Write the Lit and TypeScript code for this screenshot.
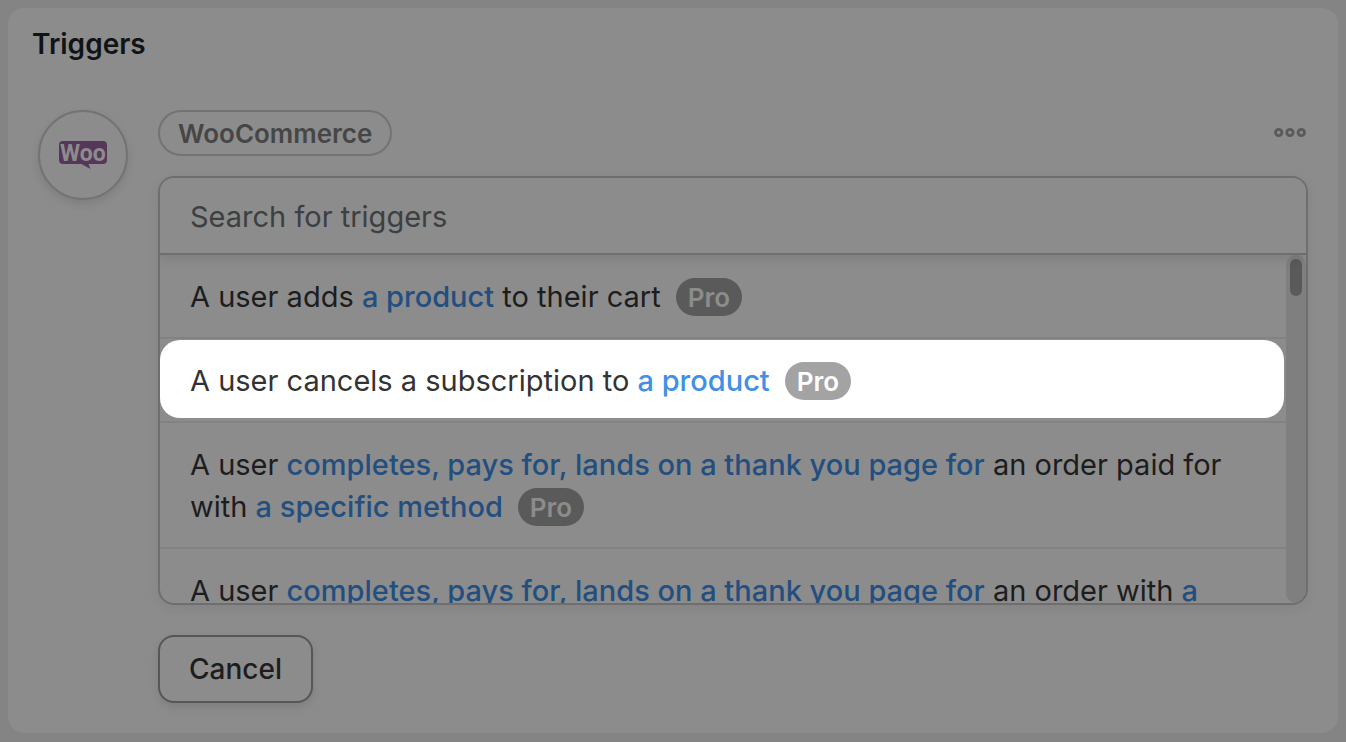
import { LitElement, html, css } from "lit";
import { customElement } from "lit/decorators.js";

interface Part {
  text: string;
  token?: boolean;
}

interface Trigger {
  parts: Part[];
  pro: boolean;
  active?: boolean;
}

const TRIGGERS: Trigger[] = [
  {
    parts: [{ text: "A user adds " }, { text: "a product", token: true }, { text: " to their cart" }],
    pro: true,
  },
  {
    parts: [{ text: "A user cancels a subscription to " }, { text: "a product", token: true }],
    pro: true,
    active: true,
  },
  {
    parts: [
      { text: "A user " },
      { text: "completes, pays for, lands on a thank you page for", token: true },
      { text: " an order paid for with " },
      { text: "a specific method", token: true },
    ],
    pro: true,
  },
  {
    parts: [
      { text: "A user " },
      { text: "completes, pays for, lands on a thank you page for", token: true },
      { text: " an order with " },
      { text: "a", token: true },
    ],
    pro: false,
  },
];

@customElement("app-root")
export class AppRoot extends LitElement {
  static styles = css`
    :host {
      display: block;
      box-sizing: border-box;
      min-height: 100vh;
      padding: 8px 8px 9px;
      background: #848484;
      color: #1d1d1d;
      font-family: Inter, "Liberation Sans", sans-serif;
    }
    * {
      box-sizing: border-box;
    }
    .panel {
      padding: 16px 30px 30px;
      border-radius: 16px;
      background: #8c8c8c;
    }
    .title {
      margin: 0 0 46px -6px;
      color: #101417;
      font-size: 28px;
      line-height: 40px;
      font-weight: 600;
    }
    .trigger {
      display: grid;
      grid-template-columns: 90px minmax(0, 1fr);
      column-gap: 30px;
      align-items: start;
    }
    .logo {
      display: grid;
      place-items: center;
      height: 90px;
      border: 2px solid #737373;
      border-radius: 50%;
      box-shadow: 0 4px 8px rgba(0, 0, 0, 0.1);
    }
    .logo-text {
      font-family: Roboto, sans-serif;
      font-weight: 700;
      fill: #8c8c8c;
    }
    .head {
      display: flex;
      justify-content: space-between;
      align-items: center;
      margin-bottom: 20px;
    }
    .name {
      height: 46px;
      padding: 0 18px;
      border: 2px solid #737373;
      border-radius: 23px;
      color: #464646;
      font-size: 26px;
      line-height: 44px;
      font-weight: 600;
    }
    .more {
      display: flex;
      padding: 0;
      border: 0;
      background: none;
    }
    .picker {
      overflow: hidden;
      border: 2px solid #6e6e6e;
      border-radius: 16px;
    }
    .shade {
      margin-bottom: 30px;
      border-radius: 16px;
      box-shadow: 0 4px 12px rgba(0, 0, 0, 0.06);
    }
    .search {
      position: relative;
      display: block;
      width: 100%;
      height: 77px;
      padding: 2px 30px 0;
      border: 0;
      border-bottom: 2px solid #6e6e6e;
      border-radius: 0;
      outline: 0;
      background: #8c8c8c;
      box-shadow: 0 4px 10px rgba(0, 0, 0, 0.1);
      color: #1d1d1d;
      font: 400 29px/40px Inter, sans-serif;
    }
    .search::placeholder {
      color: #3c4043;
      opacity: 1;
    }
    .body {
      display: flex;
      height: 348px;
    }
    .list {
      flex: 1;
      min-width: 0;
      margin: 0;
      padding: 0;
      overflow: hidden;
      list-style: none;
    }
    .item {
      border-bottom: 2px solid #828282;
    }
    .option {
      padding: 21px 30px 19px;
      font-size: 29px;
      line-height: 42px;
    }
    .active .option {
      margin: 1px 2px 3px 0;
      padding: 20px 30px 16px;
      border-radius: 20px;
      background: #fff;
      color: #333;
    }
    .token {
      color: #234f80;
      font-weight: 500;
    }
    .active .token {
      color: #4190e6;
    }
    .pro {
      display: inline-block;
      height: 38px;
      margin-left: 15px;
      padding: 0 12px;
      border-radius: 19px;
      background: #5a5a5a;
      color: #8c8c8c;
      font-size: 26px;
      line-height: 40px;
      font-weight: 600;
      vertical-align: baseline;
    }
    .active .pro {
      background: #a3a3a3;
      color: #fff;
    }
    .track {
      width: 20px;
      padding: 4px;
      border-radius: 10px;
      background: #7f7f7f;
    }
    .thumb {
      height: 37px;
      border-radius: 6px;
      background: #5a5a5a;
    }
    .cancel {
      display: block;
      height: 68px;
      padding: 0 29px;
      border: 2px solid #565656;
      border-radius: 16px;
      background: #8c8c8c;
      box-shadow: 0 4px 8px rgba(0, 0, 0, 0.1);
      color: #1d1d1d;
      font: 500 28px/40px Inter, sans-serif;
    }
  `;

  private renderItem(t: Trigger) {
    return html`<li class="item ${t.active ? "active" : ""}">
      <div class="option">${t.parts.map((p) =>
        p.token ? html`<span class="token">${p.text}</span>` : p.text
      )}${t.pro ? html`<span class="pro">Pro</span>` : ""}</div>
    </li>`;
  }

  render() {
    return html`
      <main class="panel">
        <h1 class="title">Triggers</h1>
        <section class="trigger">
          <div class="logo">
            <svg width="48" height="30" viewBox="0 0 48 30" role="img" aria-label="WooCommerce">
              <path
                d="M4 1H44Q48 1 48 5V20Q48 24 44 24H29.500L31.500 29L22.500 24H4Q0 24 0 20V5Q0 1 4 1Z"
                fill="#55375a"
              />
              <text class="logo-text" x="1" y="21" font-size="23">Woo</text>
            </svg>
          </div>
          <div>
            <div class="head">
              <div class="name">WooCommerce</div>
              <button class="more" aria-label="More options">
                <svg width="34" height="12" viewBox="0 0 34 12" fill="none" stroke="#5a5a5a" stroke-width="2.800">
                  <circle cx="4.700" cy="5.500" r="3.200" />
                  <circle cx="16" cy="5.500" r="3.200" />
                  <circle cx="27.300" cy="5.500" r="3.200" />
                </svg>
              </button>
            </div>
            <div class="shade">
              <div class="picker">
                <input class="search" type="text" placeholder="Search for triggers" aria-label="Search for triggers" />
                <div class="body">
                  <ul class="list">
                    ${TRIGGERS.map((t) => this.renderItem(t))}
                  </ul>
                  <div class="track"><div class="thumb"></div></div>
                </div>
              </div>
            </div>
            <button class="cancel">Cancel</button>
          </div>
        </section>
      </main>
    `;
  }
}
